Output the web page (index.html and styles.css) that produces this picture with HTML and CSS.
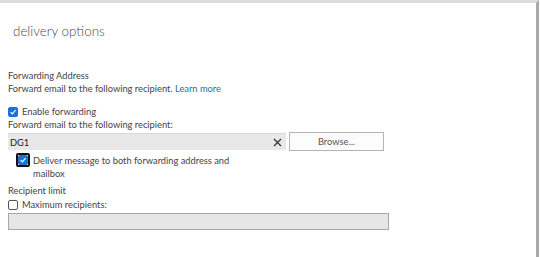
FILE: index.html
```html
<!DOCTYPE html>
<html>
<head>
<meta charset="utf-8">
<link rel="stylesheet" href="styles.css">
</head>
<body>
<div class="window">
  <h1 class="title">delivery options</h1>
  <div class="content">
    <div class="section-label">Forwarding Address</div>
    <div class="text">Forward email to the following recipient. <a class="link" href="#">Learn more</a></div>

    <label class="check-row enable">
      <span class="box checked"><svg viewBox="0 0 10 10" width="10" height="10"><path d="M2 5.2 L4.2 7.3 L8.2 2.6" fill="none" stroke="#fff" stroke-width="1.5"/></svg></span>
      <span>Enable forwarding</span>
    </label>
    <div class="text">Forward email to the following recipient:</div>

    <div class="recipient-row">
      <div class="input-field">
        <span class="value">DG1</span>
        <span class="clear">
          <svg viewBox="0 0 9 9" width="9" height="9"><path d="M1 1 L8 8 M8 1 L1 8" stroke="#333" stroke-width="1.3"/></svg>
        </span>
      </div>
      <button class="browse">Browse...</button>
    </div>

    <label class="check-row deliver">
      <span class="focus-ring"><span class="box checked"><svg viewBox="0 0 10 10" width="10" height="10"><path d="M2 5.2 L4.2 7.3 L8.2 2.6" fill="none" stroke="#fff" stroke-width="1.5"/></svg></span></span>
      <span class="deliver-text">Deliver message to both forwarding address and mailbox</span>
    </label>

    <div class="section-label limit">Recipient limit</div>
    <label class="check-row max">
      <span class="box"></span>
      <span>Maximum recipients:</span>
    </label>
    <div class="disabled-input"></div>
  </div>
</div>
</body>
</html>
```
FILE: styles.css
```css
html, body {
  margin: 0;
  padding: 0;
  background: #fff;
}
body {
  font-family: Lato, "Open Sans", sans-serif;
  font-size: 9.3px;
  color: #444;
}
.window {
  width: 539px;
  height: 257px;
  box-sizing: border-box;
  border-top: 3px solid #dcdcdc;
  border-right: 3px solid #a9a9a9;
  overflow: hidden;
}
.title {
  margin: 0;
  padding: 18px 0 0 13px;
  font-weight: 300;
  font-size: 13.4px;
  line-height: 20px;
  color: #4a4a4a;
}
.content {
  padding: 28px 0 0 8px;
}
.section-label, .text {
  line-height: 13px;
  white-space: nowrap;
}
.link {
  color: #1f6fa5;
  text-decoration: none;
}
.check-row {
  display: flex;
  align-items: center;
  gap: 4px;
  line-height: 13px;
}
.enable {
  margin-top: 10px;
}
.box {
  width: 10px;
  height: 10px;
  box-sizing: border-box;
  border: 1px solid #555;
  border-radius: 2px;
  background: #fff;
  display: flex;
  align-items: center;
  justify-content: center;
}
.box.checked {
  background: #1a73d6;
  border-color: #1a73d6;
}
.recipient-row {
  display: flex;
  gap: 3px;
  margin-top: 1px;
  align-items: center;
}
.input-field {
  width: 278px;
  height: 17px;
  box-sizing: border-box;
  background: #e8e8e8;
  border-top: 1px solid #d8d8d8;
  display: flex;
  align-items: center;
  justify-content: space-between;
  padding: 0 4px 0 2px;
}
.value {
  color: #222;
}
.clear {
  display: flex;
  align-items: center;
}
.browse {
  width: 95px;
  height: 19px;
  box-sizing: border-box;
  border: 1px solid #b4b4b4;
  background: #fcfcfc;
  font-family: inherit;
  font-size: 9.3px;
  color: #555;
  padding: 0;
}
.deliver {
  align-items: flex-start;
  margin: 2px 0 0 8px;
  gap: 3px;
}
.focus-ring {
  width: 14px;
  height: 14px;
  box-sizing: border-box;
  border: 2px solid #111;
  border-radius: 2px;
  display: flex;
  align-items: center;
  justify-content: center;
}
.deliver-text {
  width: 210px;
  padding-top: 1px;
}
.limit {
  margin-top: 4px;
}
.max {
  margin-top: 1px;
}
.disabled-input {
  margin-top: 2px;
  width: 381px;
  height: 17px;
  box-sizing: border-box;
  border: 1px solid #a8a8a8;
  background: #e6e6e6;
}
```
